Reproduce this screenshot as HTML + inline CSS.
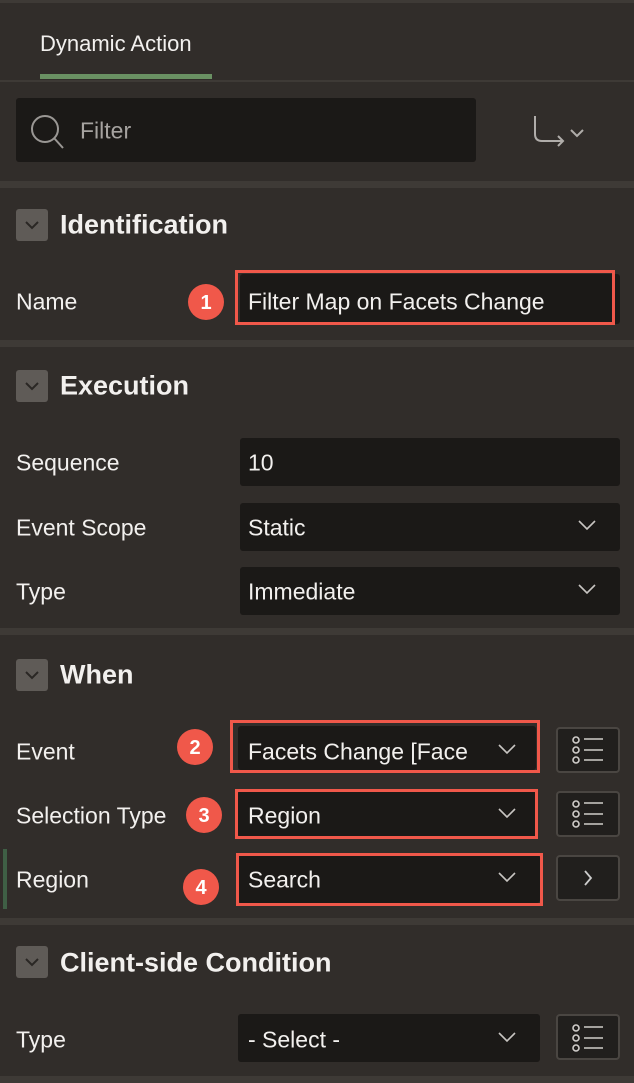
<!DOCTYPE html>
<html><head><meta charset="utf-8"><style>
*{margin:0;padding:0;box-sizing:border-box}
body{width:634px;height:1082px;background:#312d2a;font-family:"Liberation Sans",sans-serif;color:#f2f0ee;position:relative;overflow:hidden}
.a{position:absolute}
.t{font-size:23px;letter-spacing:0;line-height:1;transform:translateY(-50%);white-space:nowrap}
.h{font-size:27px;font-weight:bold;letter-spacing:0;line-height:1;transform:translateY(-50%);white-space:nowrap}
.sep{position:absolute;left:0;width:634px;height:7px;background:#3e3a36}
.inp{position:absolute;background:#1b1917;border-radius:3px}
.tog{position:absolute;left:16px;width:32px;height:32px;background:#5f5b57;border-radius:3px}
.red{position:absolute;border:3px solid #f0584a}
.badge{position:absolute;width:36px;height:36px;border-radius:50%;background:#f0584a;color:#fff;font-size:20px;font-weight:bold;text-align:center;line-height:38px}
.btn{position:absolute;width:64px;height:46px;border:2px solid #4a4642;background:#211f1d;border-radius:4px}
</style></head><body>
<div class="a" style="left:0;top:0;width:634px;height:3px;background:#3e3a36"></div>
<div class="a t" style="left:40px;top:44px;font-size:22px">Dynamic Action</div>
<div class="a" style="left:40px;top:74px;width:172px;height:5px;background:#6a9163"></div>
<div class="a" style="left:0;top:80px;width:634px;height:2px;background:#3e3a36"></div>
<div class="inp" style="left:16px;top:98px;width:460px;height:64px"></div>
<svg class="a" style="left:28px;top:111px" width="40" height="40" viewBox="0 0 40 40" fill="none" stroke="#9a9794" stroke-width="2"><circle cx="17" cy="18" r="13"/><line x1="26" y1="27" x2="35" y2="37"/></svg>
<div class="a t" style="left:80px;top:131px;color:#a6a3a0">Filter</div>
<svg class="a" style="left:526px;top:110px" width="70" height="40" viewBox="0 0 70 40" fill="none" stroke="#b0adaa" stroke-width="2"><path d="M9 6 V24 Q9 31 16 31 H37 M32 26 L37 31 L32 36"/><path d="M45 20 L51 26 L57 20"/></svg>
<div class="sep" style="top:181px"></div>

<div class="tog" style="top:209px"></div>
<svg class="a" style="left:16px;top:209px" width="32" height="32" viewBox="0 0 32 32" fill="none" stroke="#2a2724" stroke-width="2"><path d="M10 13 L16 19 L22 13"/></svg>
<div class="a h" style="left:60px;top:225px">Identification</div>
<div class="a t" style="left:16px;top:302px">Name</div>
<div class="badge" style="left:188px;top:284px">1</div>
<div class="inp" style="left:240px;top:274px;width:380px;height:50px"></div>
<div class="red" style="left:235px;top:270px;width:380px;height:55px"></div>
<div class="a t" style="left:248px;top:302px">Filter Map on Facets Change</div>
<div class="sep" style="top:340px"></div>

<div class="tog" style="top:370px"></div>
<svg class="a" style="left:16px;top:370px" width="32" height="32" viewBox="0 0 32 32" fill="none" stroke="#2a2724" stroke-width="2"><path d="M10 13 L16 19 L22 13"/></svg>
<div class="a h" style="left:60px;top:386px">Execution</div>
<div class="a t" style="left:16px;top:463px">Sequence</div>
<div class="inp" style="left:240px;top:438px;width:380px;height:48px"></div>
<div class="a t" style="left:248px;top:463px">10</div>
<div class="a t" style="left:16px;top:528px">Event Scope</div>
<div class="inp" style="left:240px;top:503px;width:380px;height:48px"></div>
<div class="a t" style="left:248px;top:528px">Static</div>
<div class="a t" style="left:16px;top:592px">Type</div>
<div class="inp" style="left:240px;top:567px;width:380px;height:48px"></div>
<div class="a t" style="left:248px;top:592px">Immediate</div>
<div class="sep" style="top:628px"></div>

<div class="tog" style="top:659px"></div>
<svg class="a" style="left:16px;top:659px" width="32" height="32" viewBox="0 0 32 32" fill="none" stroke="#2a2724" stroke-width="2"><path d="M10 13 L16 19 L22 13"/></svg>
<div class="a h" style="left:60px;top:675px">When</div>

<div class="a t" style="left:16px;top:752px">Event</div>
<div class="badge" style="left:177px;top:729px">2</div>
<div class="inp" style="left:238px;top:726px;width:298px;height:44px"></div>
<div class="red" style="left:230px;top:720px;width:310px;height:53px"></div>
<div class="a t" style="left:248px;top:752px">Facets Change [Face</div>
<div class="btn" style="left:556px;top:727px"></div>

<div class="a t" style="left:16px;top:816px">Selection Type</div>
<div class="badge" style="left:186px;top:797px">3</div>
<div class="inp" style="left:238px;top:791px;width:298px;height:46px"></div>
<div class="red" style="left:235px;top:789px;width:303px;height:50px"></div>
<div class="a t" style="left:248px;top:816px">Region</div>
<div class="btn" style="left:556px;top:791px"></div>

<div class="a" style="left:3px;top:849px;width:4px;height:60px;background:#3f5f45"></div>
<div class="a t" style="left:16px;top:880px">Region</div>
<div class="badge" style="left:183px;top:869px">4</div>
<div class="inp" style="left:238px;top:855px;width:302px;height:48px"></div>
<div class="red" style="left:236px;top:853px;width:307px;height:53px"></div>
<div class="a t" style="left:248px;top:880px">Search</div>
<div class="btn" style="left:556px;top:855px"></div>
<svg class="a" style="left:556px;top:855px" width="64" height="46" viewBox="0 0 64 46" fill="none" stroke="#ccc" stroke-width="1.8"><path d="M29 16 L35 23 L29 30"/></svg>
<div class="sep" style="top:918px"></div>

<div class="tog" style="top:946px"></div>
<svg class="a" style="left:16px;top:946px" width="32" height="32" viewBox="0 0 32 32" fill="none" stroke="#2a2724" stroke-width="2"><path d="M10 13 L16 19 L22 13"/></svg>
<div class="a h" style="left:60px;top:963px">Client-side Condition</div>
<div class="a t" style="left:16px;top:1040px">Type</div>
<div class="inp" style="left:238px;top:1014px;width:302px;height:48px"></div>
<div class="a t" style="left:248px;top:1040px">- Select -</div>
<div class="btn" style="left:556px;top:1014px"></div>
<div class="sep" style="top:1076px"></div>

<svg class="a" style="left:0;top:0" width="634" height="1082" fill="none" stroke="#c8c5c2" stroke-width="1.6">
<path d="M579 521 L587 529 L595 521"/>
<path d="M579 585 L587 593 L595 585"/>
<path d="M499 745 L507 753 L515 745"/>
<path d="M499 809 L507 817 L515 809"/>
<path d="M499 873 L507 881 L515 873"/>
<path d="M499 1033 L507 1041 L515 1033"/>
<g stroke="#d0cdca" stroke-width="1.6">
<circle cx="576" cy="740" r="3"/><circle cx="576" cy="750" r="3"/><circle cx="576" cy="760" r="3"/>
<path d="M584 739 H603 M584 750 H603 M584 760 H603"/>
<circle cx="576" cy="804" r="3"/><circle cx="576" cy="814" r="3"/><circle cx="576" cy="824" r="3"/>
<path d="M584 803 H603 M584 814 H603 M584 824 H603"/>
<circle cx="576" cy="1028" r="3"/><circle cx="576" cy="1038" r="3"/><circle cx="576" cy="1048" r="3"/>
<path d="M584 1027 H603 M584 1038 H603 M584 1048 H603"/>
</g>
</svg>
</body></html>
